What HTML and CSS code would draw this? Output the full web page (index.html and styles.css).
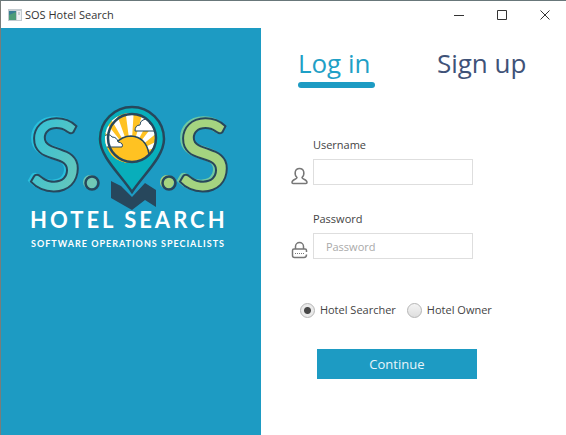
FILE: index.html
```html
<!DOCTYPE html>
<html lang="en">
<head>
<meta charset="utf-8">
<title>SOS Hotel Search</title>
<link rel="stylesheet" href="styles.css">
</head>
<body>
<div class="window">
  <header class="titlebar">
    <svg class="app-icon" viewBox="0 0 14 12" aria-hidden="true">
      <rect width="14" height="12" fill="#c3cbd0"/>
      <rect x="1" y="2" width="7" height="9" fill="#397d93"/>
      <path d="M1 11V6l7-3v8z" fill="#4d9c78"/>
      <rect x="9" y="2" width="4" height="9" fill="#eef1f3"/>
      <path d="M11 3v3" stroke="#a2abb2"/>
    </svg>
    <span class="title">SOS Hotel Search</span>
    <div class="controls">
      <button type="button" aria-label="Minimize"><svg viewBox="0 0 10 10"><path d="M0 5.500h10"/></svg></button>
      <button type="button" aria-label="Maximize"><svg viewBox="0 0 10 10"><path d="M.5 .5h9v9h-9z"/></svg></button>
      <button type="button" aria-label="Close"><svg viewBox="0 0 10 10"><path d="M.5 .5l9 9m0-9l-9 9"/></svg></button>
    </div>
  </header>
  <main class="content">
    <section class="brand">
      <svg class="logo" viewBox="25 85 210 180">
        <defs>
          <linearGradient id="teal" x1="0" y1="0" x2="1" y2="1">
            <stop offset="0" stop-color="#29bfdc"/>
            <stop offset="1" stop-color="#70c8b5"/>
          </linearGradient>
          <clipPath id="view"><circle cx="130" cy="138" r="25"/></clipPath>
        </defs>
        <text class="letter aqua" x="29" y="190" fill="url(#teal)">S</text>
        <text class="letter lime" x="178" y="190" fill="#a5d480">S</text>
        <circle cx="90" cy="182" r="7" fill="#70c8b5"/>
        <circle class="ink" cx="92" cy="183" r="6.500"/>
        <circle cx="167" cy="182" r="7" fill="#a5d480"/>
        <circle class="ink" cx="169" cy="183" r="6.500"/>
        <path d="M111 181l10 5 11 11 13-14 11 7v17l-11-7-13 10-21-12z" fill="#27475c"/>
        <path d="M130 192C119 174 98 156 98 139a33 33 0 0 1 66 0C164 156 142 177 132 193z" fill="#08aebb"/>
        <path class="ink" d="M132 192C121 175 100 157 100 139a32 32 0 0 1 64 0C164 157 143 175 132 192z"/>
        <g clip-path="url(#view)">
          <rect x="104" y="112" width="54" height="54" fill="#ffc222"/>
          <path d="M131 154L98 127l5-8zM131 154L107 112h9zM131 154L125 108h9zM131 154L144 108l9 4zM131 154L158 119l5 9zM131 154L164 138v8z" fill="#fff"/>
          <circle cx="130" cy="155" r="19" fill="#ffc222"/>
          <path class="fine" d="M115 144q7-8 16-8 15 1 18 18"/>
          <path class="cloud" d="M135 131h20v-5q-2-4-5-2-2-7-7-4-3 1-3 5-5 0-5 6z"/>
          <path class="cloud" d="M102 147h20q2-4-4-5-1-5-6-5-2-4-8-1z"/>
        </g>
        <circle class="ink" cx="132" cy="138" r="24"/>
        <text class="name" x="30" y="228">HOTEL SEARCH</text>
        <text class="tagline" x="31" y="247">SOFTWARE OPERATIONS SPECIALISTS</text>
      </svg>
    </section>
    <section class="account">
      <nav class="tabs">
        <a class="tab active" href="#login">Log in</a>
        <a class="tab" href="#signup">Sign up</a>
      </nav>
      <form class="login" id="login">
        <div class="field">
          <label for="username">Username</label>
          <svg viewBox="0 0 17 18" aria-hidden="true"><path d="M6 10.500C3 7.500 3.500 1.500 8.500 1.500S14 7.500 11 10.500C11 12.500 16 12 16 15.500q0 1-1 1H2q-1 0-1-1C1 12 6 12.500 6 10.500z"/></svg>
          <input id="username" type="text">
        </div>
        <div class="field">
          <label for="password">Password</label>
          <svg viewBox="0 0 17 18" aria-hidden="true"><path d="M4.500 8V5.500a4 4 0 0 1 8 0V8M15.500 11V9.500q0-1.500-1.500-1.500H3Q1.500 8 1.500 9.500v5Q1.500 16.500 3.500 16.500H13q2.500 0 2.500-3"/><path class="dots" d="M4 12.500h10"/></svg>
          <input id="password" type="password" placeholder="Password">
        </div>
        <div class="roles">
          <label><input type="radio" name="role" checked>Hotel Searcher</label>
          <label><input type="radio" name="role">Hotel Owner</label>
        </div>
        <button class="continue" type="button">Continue</button>
      </form>
    </section>
  </main>
</div>
</body>
</html>
```
FILE: styles.css
```css
* { box-sizing: border-box; }

body {
  margin: 0;
  font: 11px/16px "Open Sans", "Noto Sans", sans-serif;
  color: #444;
  background: #fff;
}

.window {
  display: flex;
  flex-direction: column;
  min-height: 100vh;
  border-top: 1px solid #68777a;
  border-left: 1px solid #777d7b;
}

.titlebar {
  display: flex;
  align-items: center;
  height: 27px;
  padding-left: 7px;
}

.app-icon { width: 14px; height: 12px; margin-right: 3px; }
.title { flex: 1; color: #333; }
.controls { display: flex; }

.controls button {
  display: grid;
  place-items: center;
  width: 43px;
  height: 27px;
  padding: 0;
  border: 0;
  background: none;
}

.controls svg { width: 10px; height: 10px; fill: none; stroke: #333; }

.content {
  display: grid;
  grid-template-columns: 46fr 54fr;
  flex: 1;
}

.brand { padding: 57px 24px 0; background: #1d9bc3; }
.logo { display: block; width: 100%; max-width: 210px; overflow: visible; }

.letter {
  font: 96px Lato, sans-serif;
  stroke: #27475c;
  stroke-width: 4px;
  paint-order: stroke;
}

.aqua { filter: drop-shadow(-2px -1px 0 #29bfdc); }
.lime { filter: drop-shadow(-2px -1px 0 #70c8a0); }
.ink { fill: none; stroke: #27475c; stroke-width: 2.5; }
.fine { fill: none; stroke: #27475c; stroke-width: 1.500; }
.cloud { fill: #fff; stroke: #27475c; stroke-width: 1; }
.name { font: bold 22px Lato, sans-serif; letter-spacing: 3px; fill: #fff; }
.tagline { font: bold 9px Lato, sans-serif; letter-spacing: 1px; fill: #fff; }

.account { padding: 16px 24px 24px 37px; }
.tabs { display: flex; gap: 62px; }

.tab {
  font-size: 26px;
  line-height: 38px;
  color: #3f5278;
  text-decoration: none;
}

.tab::after {
  content: "";
  display: block;
  width: 77px;
  height: 6px;
  border-radius: 3px;
}

.active { color: #1fa0c6; }
.active::after { background: #1d9bc3; }

.login { padding-top: 49px; }

.field {
  display: grid;
  grid-template-columns: 17px 160px;
  column-gap: 5px;
  row-gap: 6px;
  align-items: end;
  margin: 0 0 26px -7px;
}

.field label { grid-column: 2; }
.field svg { width: 17px; height: 18px; fill: none; stroke: #777; stroke-width: 1.500; }
.field .dots { stroke-width: 1; stroke-dasharray: 1 1; }

.field input {
  width: 100%;
  height: 26px;
  padding: 0 12px;
  border: 1px solid #dedede;
  background: #fff;
  font: inherit;
  color: inherit;
}

.field input::placeholder { color: #aaa; }

.roles { display: flex; gap: 11px; padding: 17px 0 0 2px; }
.roles label { display: flex; align-items: center; gap: 5px; }

.roles input {
  appearance: none;
  width: 15px;
  height: 15px;
  margin: 0;
  border: 1px solid #b5b5b5;
  border-radius: 50%;
  background: linear-gradient(#f4f4f4, #dedede);
}

.roles input:checked {
  background: radial-gradient(circle, #484848 0 3px, #eaeaea 4px);
}

.continue {
  display: block;
  width: 160px;
  height: 30px;
  margin: 31px 0 0 19px;
  padding: 0;
  border: 0;
  background: #1d9bc3;
  color: #e7f5fa;
  font: 13px "Open Sans", "Noto Sans", sans-serif;
}
```
